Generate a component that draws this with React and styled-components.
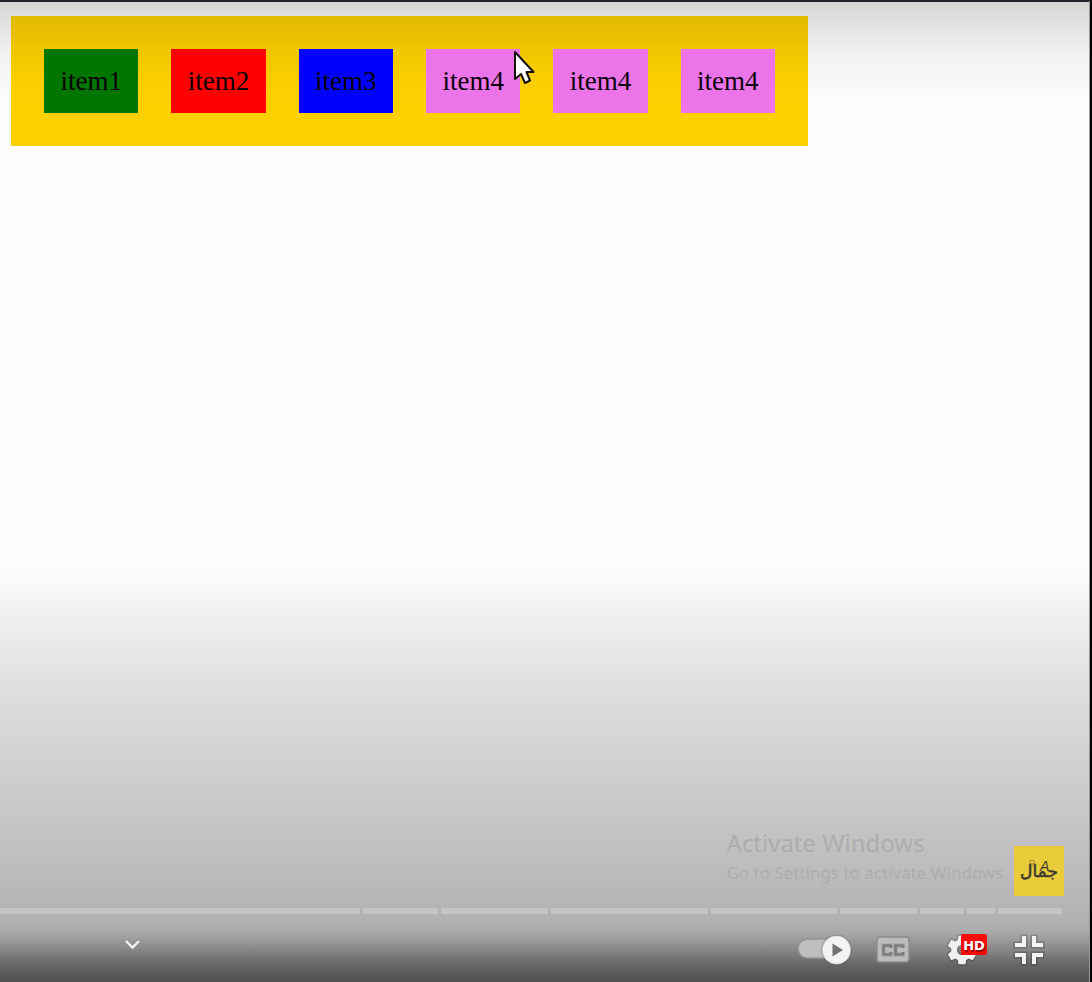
import React from "react";
import styled, { createGlobalStyle } from "styled-components";

const GlobalStyle = createGlobalStyle`
  * { box-sizing: border-box; }
  body { margin: 0; background: #000; }
`;

const Player = styled.div`
  display: flex;
  flex-direction: column;
  min-height: 100vh;
  margin-right: 2px;
  border-top: 2px solid #25232c;
  border-right: 1px solid #9a9a9a;
  background:
    linear-gradient(to bottom, #d5d5d4 0, #dfdfde 16px, #f2f2f2 52px, rgba(254, 254, 254, 0) 110px),
    linear-gradient(to top, #505050 0, #646464 16px, #8a8a8a 34px, #a6a6a6 48px, #b0b0b0 56px,
      #bababa 100px, #cbcbcb 190px, #dcdcdc 280px, #ececec 352px, #fafafa 405px, #fefefe 435px);
`;

const Page = styled.main`
  flex: 1;
  padding: 14px 11px;
`;

const Container = styled.div`
  display: flex;
  gap: 33px;
  width: 797px;
  max-width: 100%;
  padding: 33px;
  background: linear-gradient(to bottom, #e0b800 0, #efc500 30px, #fccf00 70px, #fdd100 100%);
`;

const Item = styled.div`
  flex: 1;
  padding: 16px 0;
  background: ${(p) => p.$color};
  color: #0a0208;
  font: 27px/32px "Liberation Serif", serif;
  text-align: center;
`;

const Cursor = styled.svg`
  position: absolute;
  left: 512px;
  top: 49px;
`;

const Notices = styled.aside`
  display: flex;
  justify-content: flex-end;
  align-items: flex-end;
  gap: 6px;
  padding-right: 25px;
  margin-bottom: 12px;
`;

const Activation = styled.div`
  height: 69px;
  color: #adadad;
  font-family: "Noto Sans", sans-serif;
`;

const ActivationTitle = styled.div`
  font-size: 24px;
  line-height: 32px;
`;

const ActivationText = styled.div`
  font-size: 17px;
  line-height: 28px;
`;

const Channel = styled.a`
  display: block;
  width: 50px;
  height: 50px;
  background: #eacb3a;
`;

const Chapters = styled.div`
  display: flex;
  gap: 3px;
  margin-right: 27px;
`;

const Chapter = styled.span`
  flex: ${(p) => p.$length} 1 0;
  height: 6px;
  background: #c5c5c5;
`;

const Controls = styled.div`
  display: flex;
  justify-content: space-between;
  align-items: center;
  height: 68px;
  padding: 4px 45px 0 121px;
`;

const ControlGroup = styled.div`
  display: flex;
  align-items: center;
  gap: ${(p) => p.$gap || 0}px;
`;

const Button = styled.button`
  position: relative;
  display: block;
  padding: 0;
  border: 0;
  background: none;
  cursor: pointer;

  svg { display: block; overflow: visible; }
`;

const ChevronButton = styled(Button)`
  margin-bottom: 10px;
`;

const Badge = styled.span`
  position: absolute;
  top: 0;
  left: 14px;
  width: 26px;
  height: 21px;
  border-radius: 2px;
  background: #fa0a0a;
  color: #fff;
  font: bold 13px/23px "DejaVu Sans", sans-serif;
  text-align: center;
  text-shadow: 1px 2px 1px #900000;
`;

const items = [
  ["item1", "#007600"],
  ["item2", "#fe0000"],
  ["item3", "#0000fe"],
  ["item4", "#ea74e8"],
  ["item4", "#ea74e8"],
  ["item4", "#ea74e8"],
];

const chapters = [360, 75, 107, 157, 126, 77, 44, 28, 64];

const halo = { stroke: "#000", strokeOpacity: 0.18, strokeWidth: 3, paintOrder: "stroke" };

const GEAR =
  "m23.94 18.78c.03-.25.05-.51.05-.78 0-.27-.02-.52-.05-.78l1.68-1.32c.15-.12.19-.33.09-.51l-1.6-2.76c-.09-.17-.31-.24-.48-.17l-1.99.8c-.41-.32-.86-.58-1.35-.78l-.3-2.12c-.02-.19-.19-.33-.39-.33h-3.2c-.2 0-.36.14-.39.33l-.3 2.12c-.48.2-.93.47-1.35.78l-1.99-.8c-.18-.07-.39 0-.48.17l-1.6 2.76c-.1.17-.05.39.09.51l1.68 1.32c-.03.25-.05.52-.05.78 0 .26.02.52.05.78l-1.68 1.32c-.15.12-.19.33-.09.51l1.6 2.76c.09.17.31.24.48.17l1.99-.8c.41.32.86.58 1.35.78l.3 2.12c.02.19.19.33.39.33h3.2c.2 0 .36-.14.39-.33l.3-2.12c.48-.2.93-.47 1.35-.78l1.99.8c.18.07.39 0 .48-.17l1.6-2.76c.09-.17.05-.39-.09-.51l-1.68-1.32zm-5.94 2.01c-1.54 0-2.8-1.25-2.8-2.8 0-1.54 1.25-2.8 2.8-2.8 1.54 0 2.8 1.25 2.8 2.8 0 1.54-1.25 2.8-2.8 2.8z";

function ChannelLogo() {
  return (
    <svg width="50" height="50" viewBox="0 0 50 50" aria-hidden="true">
      <text x="25" y="31" textAnchor="middle" fill="#3b3930" stroke="#3b3930" strokeWidth=".6" fontFamily="DejaVu Sans, sans-serif" fontSize="17">
        جمال
      </text>
      <text x="26" y="25" fill="#3b3930" fontFamily="Liberation Sans, sans-serif" fontStyle="italic" fontSize="14">
        A
      </text>
      <g fill="none" stroke="#8c7e34" strokeWidth=".8">
        <ellipse cx="18" cy="16" rx="2.5" ry="1.8" />
        <path d="M16.5 18h3M17 20h2" />
      </g>
    </svg>
  );
}

export default function App() {
  return (
    <>
      <GlobalStyle />
      <Player>
        <Page>
          <Container>
            {items.map(([label, color], i) => (
              <Item key={i} $color={color}>{label}</Item>
            ))}
          </Container>
          <Cursor width="26" height="38" viewBox="0 0 26 38" aria-hidden="true">
            <path d="M3 3V30L9 25L13 34L18 31.500L14.500 23H21.500Z" fill="#fff" stroke="#17120a" strokeWidth="2" strokeLinejoin="round" />
          </Cursor>
        </Page>

        <Notices>
          <Activation>
            <ActivationTitle>Activate Windows</ActivationTitle>
            <ActivationText>Go to Settings to activate Windows.</ActivationText>
          </Activation>
          <Channel href="#channel" aria-label="Channel">
            <ChannelLogo />
          </Channel>
        </Notices>

        <Chapters>
          {chapters.map((length, i) => (
            <Chapter key={i} $length={length} />
          ))}
        </Chapters>

        <Controls>
          <ChevronButton aria-label="Show chapters">
            <svg width="22" height="20" viewBox="0 0 22 20">
              <path d="M5 6L11.500 12.500L18 6" fill="none" stroke="#f4f4f4" strokeWidth="2.400" />
            </svg>
          </ChevronButton>
          <ControlGroup $gap={37}>
            <ControlGroup $gap={24}>
              <Button aria-label="Autoplay">
                <svg width="55" height="32" viewBox="0 0 55 32">
                  <rect x="1" y="5" width="44" height="19" rx="9.5" fill="#bebebe" stroke="#929292" strokeWidth="1.5" />
                  <circle cx="39.500" cy="16" r="14.500" fill="#f3f3f3" stroke="#000" strokeOpacity=".2" strokeWidth="1.500" />
                  <path d="M35.500 9.500V22.500L46 16Z" fill="#737373" />
                </svg>
              </Button>
              <Button aria-label="Subtitles">
                <svg width="34" height="32" viewBox="0 0 34 32">
                  <rect x="1" y="3" width="32" height="25" rx="3" fill="#bcbcbc" stroke="#8b8b8b" strokeWidth="1.500" />
                  <g fill="none" strokeLinejoin="round">
                    <path d="M15 14V11.500H7.500V20.500H15V18M27 14V11.500H19.500V20.500H27V18" stroke="#adadad" strokeWidth="5" />
                    <path d="M15 14V11.500H7.500V20.500H15V18M27 14V11.500H19.500V20.500H27V18" stroke="#7c7c7c" strokeWidth="2.600" />
                  </g>
                </svg>
              </Button>
            </ControlGroup>
            <ControlGroup $gap={37}>
              <Button aria-label="Settings">
                <svg width="30" height="32" viewBox="9.667 9.111 16.667 17.778">
                  <path d={GEAR} fill="#f1f1f1" fillRule="evenodd" {...halo} strokeWidth="1.500" />
                </svg>
                <Badge>HD</Badge>
              </Button>
              <Button aria-label="Exit full screen">
                <svg width="30" height="32" viewBox="0 0 30 32">
                  <path d="M8 2h4v11H1v-4h7zM18 2h4v7h7v4H18zM1 19h11v11H8v-7H1zM18 19h11v4h-7v7h-4z" fill="#f3f3f3" {...halo} />
                </svg>
              </Button>
            </ControlGroup>
          </ControlGroup>
        </Controls>
      </Player>
    </>
  );
}
